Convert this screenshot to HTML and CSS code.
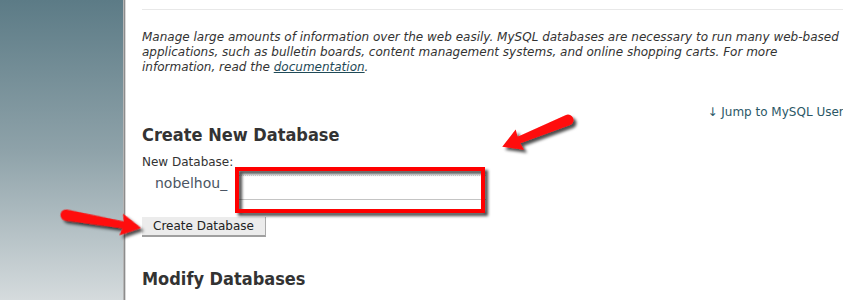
FILE: index.html
```html
<!DOCTYPE html>
<html>
<head>
<meta charset="utf-8">
<link rel="stylesheet" href="styles.css">
</head>
<body>
<div class="page">
  <div class="sidebar"></div>
  <div class="main">
    <div class="sep"></div>
    <p class="desc">Manage large amounts of information over the web easily. MySQL databases are necessary to run many web-based applications, such as bulletin boards, content management systems, and online shopping carts. For more information, read the <a href="#" class="doc">documentation</a>.</p>
    <div class="jump"><a href="#">&#8595; Jump to MySQL Users</a></div>
    <h2 class="h">Create New Database</h2>
    <div class="lbl">New Database:</div>
    <div class="dbrow">
      <span class="prefix">nobelhou_</span>
      <input class="dbinput" type="text">
    </div>
    <button class="btn">Create Database</button>
    <h2 class="h h2">Modify Databases</h2>
    <div class="lbl">Check Databases:</div>
  </div>
  <svg class="overlay" width="843" height="300" viewBox="0 0 843 300">
    <defs>
      <filter id="sh" x="-20%" y="-20%" width="140%" height="140%">
        <feDropShadow dx="3" dy="3" stdDeviation="1.6" flood-color="#000" flood-opacity="0.7"/>
      </filter>
    </defs>
    <rect x="237" y="169" width="246" height="42" fill="none" stroke="#ff0000" stroke-width="4" filter="url(#sh)"/>
    <g filter="url(#sh)">
      <path transform="translate(568 120) rotate(157.8)" d="M0 -5.5 L53 -3.5 L52 -11 L71 0 L52 11 L53 3.5 L0 5.5 A5.5 5.5 0 0 1 0 -5.5 Z" fill="#ff0a0a"/>
      <path transform="translate(66 215) rotate(9.8)" d="M0 -5.5 L58 -3.5 L56 -11 L76 0 L56 11 L58 3.5 L0 5.5 A5.5 5.5 0 0 1 0 -5.5 Z" fill="#ff0a0a"/>
    </g>
  </svg>
</div>
</body>
</html>
```
FILE: styles.css
```css
html, body {
  margin: 0;
  padding: 0;
  background: #fff;
  overflow: hidden;
}
.page {
  position: relative;
  display: flex;
  width: 843px;
  height: 300px;
  overflow: hidden;
  font-family: "DejaVu Sans", Verdana, sans-serif;
  color: #333;
}
.sidebar {
  flex: 0 0 123px;
  height: 300px;
  background: linear-gradient(#5c7b86, #8ea2a9 50%, #d5dbdd);
  border-right: 1px solid #b5b5b5;
  box-shadow: 1px 0 0 #8c8c8c, 2px 0 0 #d8d8d8;
}
.main {
  flex: 0 0 724px;
  padding-left: 16px;
  box-sizing: border-box;
  margin-left: 2px;
}
.sep {
  height: 9px;
  border-bottom: 1px solid #e8e8e8;
}
.desc {
  margin: 20px 0 0;
  font-size: 12px;
  line-height: 15px;
  font-style: italic;
  color: #333;
}
.doc {
  color: #1f4a57;
}
.jump {
  margin-top: 30px;
  text-align: right;
  font-size: 12px;
  line-height: 15px;
}
.jump a {
  color: #2b5766;
  text-decoration: none;
}
.h {
  margin: 4px 0 0;
  font-family: "DejaVu Sans Condensed", "DejaVu Sans", sans-serif;
  font-size: 18px;
  line-height: 22px;
  font-weight: bold;
  color: #333;
}
.h2 {
  margin-top: 31px;
}
.lbl {
  margin-top: 9px;
  font-size: 12px;
  line-height: 15px;
  color: #333;
}
.h2 + .lbl {
  margin-top: 9px;
}
.dbrow {
  display: flex;
  align-items: flex-start;
  margin-top: 5px;
  height: 25px;
}
.prefix {
  font-size: 14px;
  line-height: 17px;
  color: #4b5563;
  margin-left: 13px;
  width: 81px;
}
.dbinput {
  width: 250px;
  height: 25px;
  box-sizing: border-box;
  border: none;
  border-top: 1px dotted #d8d8d8;
  border-bottom: 1px solid #c4c4c4;
  background: #fff;
  padding: 0;
  margin: 0;
}
.btn {
  display: block;
  margin-top: 17px;
  width: 124px;
  height: 20px;
  padding: 0;
  font-family: "DejaVu Sans", Verdana, sans-serif;
  font-size: 12px;
  color: #222;
  background: #ececec;
  border: none;
  border-right: 1px solid #aaa;
  border-bottom: 2px solid #a0a0a0;
  box-sizing: border-box;
}
.overlay {
  position: absolute;
  left: 0;
  top: 0;
  pointer-events: none;
}
```
